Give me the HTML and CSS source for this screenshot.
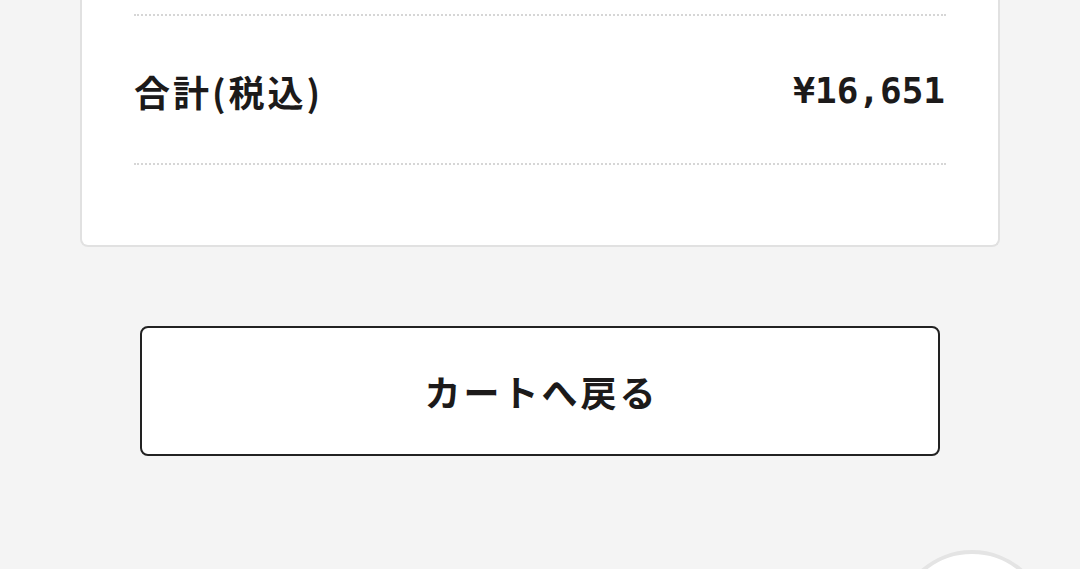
FILE: index.html
```html
<!DOCTYPE html>
<html lang="ja">
<head>
<meta charset="utf-8">
<title>ご注文内容の確認</title>
<link rel="stylesheet" href="styles.css">
</head>
<body>
<main class="page">
  <section class="summary-card">
    <div class="summary-row">
      <span class="summary-label">合計(税込)</span>
      <span class="summary-value">¥16,651</span>
    </div>
  </section>
  <div class="actions">
    <button class="back-button" type="button">カートへ戻る</button>
  </div>
</main>
<a class="page-top" href="#" aria-label="ページトップへ"></a>
</body>
</html>
```
FILE: styles.css
```css
html, body {
  margin: 0;
  padding: 0;
}

html {
  overflow: hidden;
}

body {
  background: #f4f4f4;
  color: #1c1a1a;
  font-family: "Noto Sans CJK JP", "Noto Sans", sans-serif;
  height: 569px;
  overflow: hidden;
  position: relative;
}

.page {
  display: flex;
  flex-direction: column;
  align-items: center;
}

.summary-card {
  box-sizing: border-box;
  width: 920px;
  background: #fff;
  border: 2px solid #e1e1e1;
  border-top: none;
  border-radius: 0 0 8px 8px;
  padding: 14px 52px 80px;
}

.summary-row {
  display: flex;
  justify-content: space-between;
  align-items: center;
  height: 147px;
  border-top: 2px dotted #d6d6d6;
  border-bottom: 2px dotted #d6d6d6;
}

.summary-label {
  font-size: 36px;
  font-weight: 700;
  letter-spacing: 3px;
  line-height: 1;
  margin-top: 2px;
}

.summary-value {
  font-family: "DejaVu Sans Mono", monospace;
  font-size: 36px;
  font-weight: 700;
  line-height: 1;
  margin-right: 1px;
  margin-top: 2px;
}

.actions {
  padding-top: 79px;
}

.back-button {
  box-sizing: border-box;
  width: 800px;
  height: 130px;
  background: #fff;
  border: 2px solid #222;
  border-radius: 8px;
  color: #1c1a1a;
  font-family: "Noto Sans CJK JP", "Noto Sans", sans-serif;
  font-size: 36px;
  font-weight: 700;
  letter-spacing: 3px;
  padding: 0 0 0 3px;
  cursor: pointer;
}

.page-top {
  position: absolute;
  left: 895px;
  top: 550px;
  width: 154px;
  height: 154px;
  box-sizing: border-box;
  border-radius: 50%;
  background: #fff;
  border: 4px solid #e4e4e4;
}
```
